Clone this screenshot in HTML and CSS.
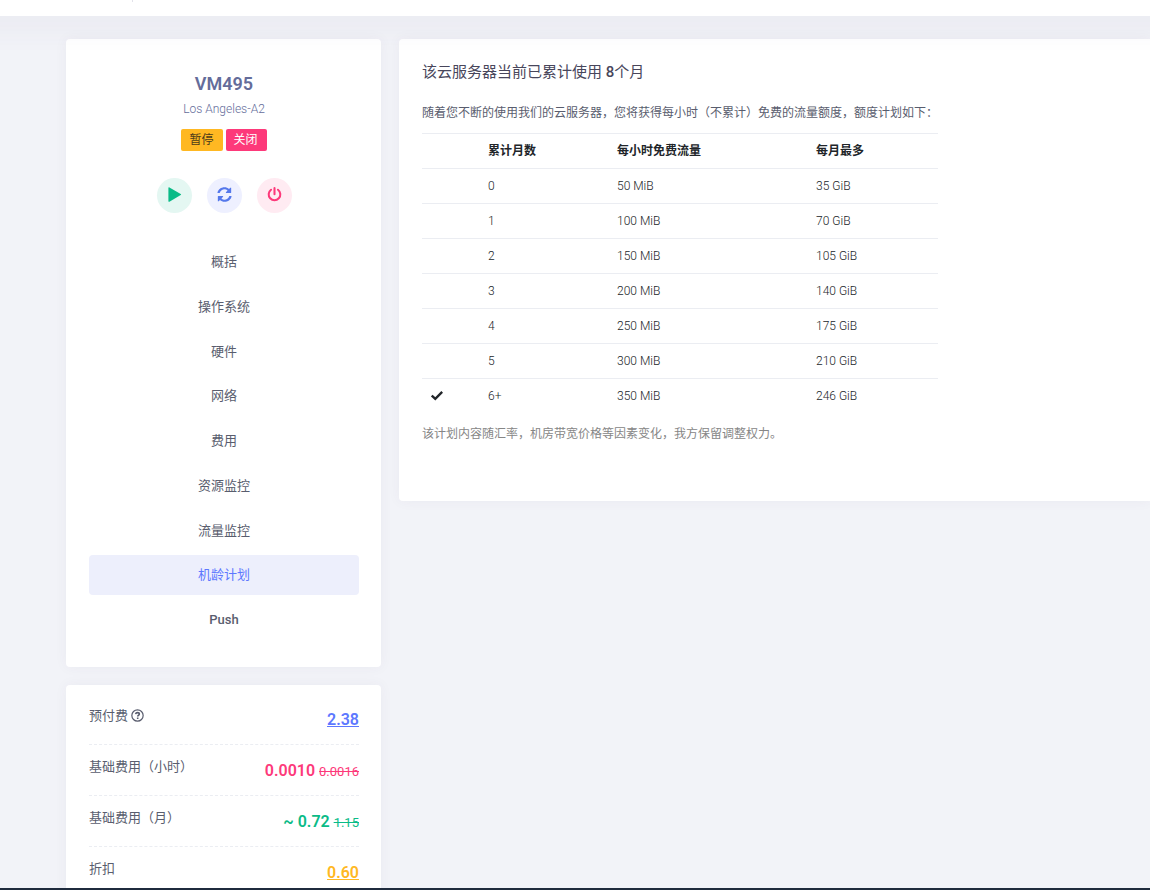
FILE: index.html
```html
<!DOCTYPE html>
<html lang="zh-CN">
<head>
<meta charset="utf-8">
<title>VM495</title>
<link rel="stylesheet" href="styles.css">
</head>
<body>
<header class="topbar"><span class="topbar-divider"></span></header>
<main class="page">
  <aside class="sidebar">
    <section class="card profile">
      <h1 class="vm-name">VM495</h1>
      <p class="vm-region">Los Angeles-A2</p>
      <div class="badges">
        <span class="badge badge-warning">暂停</span>
        <span class="badge badge-danger">关闭</span>
      </div>
      <div class="actions">
        <button class="action action-start" type="button" aria-label="启动">
          <svg viewBox="0 0 16 16" width="15" height="15"><path fill="currentColor" d="M1.500.9c0-.6.600-.8 1.100-.5l12 7c.6.300.6.900 0 1.200l-12 7c-.5.300-1.100.1-1.100-.5z"/></svg>
        </button>
        <button class="action action-restart" type="button" aria-label="重启">
          <svg viewBox="0 0 512 512" width="15" height="15"><path fill="currentColor" d="M483.500 28.500v160a19 19 0 0 1-19 19h-160v-30l56-56C331 95 296 80 257 80c-72 0-137 47-161 116l-4 12H14l3-18C37 79 137 8 257 8c58 0 112 22 154 60l40-40zM28.500 483.500v-160a19 19 0 0 1 19-19h160v30l-56 56C181 417 216 432 255 432c72 0 137-47 161-116l4-12h78l-3 18C475 433 375 504 255 504c-58 0-112-22-154-60l-40 40z"/></svg>
        </button>
        <button class="action action-power" type="button" aria-label="关闭">
          <svg viewBox="0 0 16 16" width="15" height="15" fill="none" stroke="currentColor" stroke-width="2.200" stroke-linecap="round"><path d="M8 1.200v6.400M4.300 2.900a6.200 6.200 0 1 0 7.400 0"/></svg>
        </button>
      </div>
      <nav class="menu">
        <a class="menu-item" href="#">概括</a>
        <a class="menu-item" href="#">操作系统</a>
        <a class="menu-item" href="#">硬件</a>
        <a class="menu-item" href="#">网络</a>
        <a class="menu-item" href="#">费用</a>
        <a class="menu-item" href="#">资源监控</a>
        <a class="menu-item" href="#">流量监控</a>
        <a class="menu-item menu-item-active" href="#">机龄计划</a>
        <a class="menu-item menu-item-latin" href="#">Push</a>
      </nav>
    </section>
    <section class="card prices">
      <div class="price-row">
        <span class="price-label">预付费 <svg class="help" viewBox="0 0 14 14" width="13" height="13" fill="none" stroke="currentColor"><circle cx="7" cy="7" r="6.100" stroke-width="1.300"/><path stroke-width="1.700" d="M4.900 5.500C5.200 4.300 6 3.900 7 3.900c1.200 0 2 .7 2 1.600 0 1.300-1.800 1.200-1.800 2.600M7.200 9.200v1.700"/></svg></span>
        <a class="price price-brand" href="#">2.38</a>
      </div>
      <div class="price-row">
        <span class="price-label">基础费用（小时）</span>
        <span class="price price-danger">0.0010 <del class="old">0.0016</del></span>
      </div>
      <div class="price-row">
        <span class="price-label">基础费用（月）</span>
        <span class="price price-success">~ 0.72 <del class="old">1.15</del></span>
      </div>
      <div class="price-row">
        <span class="price-label">折扣</span>
        <a class="price price-warning" href="#">0.60</a>
      </div>
    </section>
  </aside>
  <section class="card plan">
    <h2 class="plan-title">该云服务器当前已累计使用 <b class="months">8</b>个月</h2>
    <p class="plan-intro">随着您不断的使用我们的云服务器，您将获得每小时（不累计）免费的流量额度，额度计划如下：</p>
    <table class="plan-table">
      <colgroup><col class="col-mark"><col class="col-months"><col class="col-hourly"><col class="col-monthly"></colgroup>
      <thead><tr><th></th><th>累计月数</th><th>每小时免费流量</th><th>每月最多</th></tr></thead>
      <tbody>
        <tr><td></td><td>0</td><td>50 MiB</td><td>35 GiB</td></tr>
        <tr><td></td><td>1</td><td>100 MiB</td><td>70 GiB</td></tr>
        <tr><td></td><td>2</td><td>150 MiB</td><td>105 GiB</td></tr>
        <tr><td></td><td>3</td><td>200 MiB</td><td>140 GiB</td></tr>
        <tr><td></td><td>4</td><td>250 MiB</td><td>175 GiB</td></tr>
        <tr><td></td><td>5</td><td>300 MiB</td><td>210 GiB</td></tr>
        <tr><td><svg class="check" viewBox="0 0 12 12" width="12" height="12" fill="none" stroke="currentColor" stroke-width="2.400"><path d="M.8 5.500 4.300 8.800 11.200 1.900"/></svg></td><td>6+</td><td>350 MiB</td><td>246 GiB</td></tr>
      </tbody>
    </table>
    <p class="plan-note">该计划内容随汇率，机房带宽价格等因素变化，我方保留调整权力。</p>
  </section>
</main>
</body>
</html>
```
FILE: styles.css
```css
* {
  box-sizing: border-box;
}

body {
  margin: 0;
  height: 100vh;
  display: flex;
  flex-direction: column;
  overflow: hidden;
  background: #f2f3f8;
  border-bottom: 2px solid #1f2b3d;
  color: #595d6e;
  font: 400 13px/20px Roboto, "Noto Sans CJK SC", sans-serif;
}

h1, h2, p {
  margin: 0;
}

/* Wider than the window, so that its shadow does not fade at the edges. */
.topbar {
  flex: none;
  position: relative;
  z-index: 1;
  height: 16px;
  margin: 0 -40px;
  padding-left: 172px;
  background: #fff;
  box-shadow: 0 10px 30px rgba(82, 63, 105, 0.08);
}

.topbar-divider {
  display: block;
  width: 1px;
  height: 2px;
  background: #e2e2ea;
}

.page {
  flex: 1;
  min-height: 0;
  overflow: hidden;
  display: flex;
  align-items: flex-start;
  gap: 18px;
  padding: 23px 0 0 66px;
}

.card {
  background: #fff;
  border-radius: 4px;
  box-shadow: 0 0 13px rgba(82, 63, 105, 0.05);
}

.sidebar {
  flex: none;
  width: 315px;
  display: flex;
  flex-direction: column;
  gap: 18px;
}

.profile {
  padding: 32px 22px 27px 23px;
  text-align: center;
}

.vm-name {
  color: #646c9a;
  font-size: 18px;
  font-weight: 600;
  line-height: 26px;
}

.vm-region {
  margin-top: 2px;
  color: #646c9a;
  font-size: 12px;
  font-weight: 300;
}

.badges {
  display: flex;
  justify-content: center;
  gap: 3px;
  margin-top: 10px;
}

.badge {
  padding: 0 9px 0 8px;
  border-radius: 2px;
  font-size: 12px;
  line-height: 22px;
}

.badge-warning {
  background: #ffb822;
  color: #4d3c1a;
}

.badge-danger {
  background: #fd397a;
  color: #fff;
}

.actions {
  display: flex;
  justify-content: center;
  gap: 15px;
  margin-top: 27px;
}

.action {
  display: flex;
  align-items: center;
  justify-content: center;
  width: 35px;
  height: 35px;
  padding: 0 0 2px;
  border: 0;
  border-radius: 50%;
}

.action-start {
  background: #e4f7f2;
  color: #0abb87;
}

.action-restart {
  background: #eef0ff;
  color: #5578eb;
}

.action-power {
  background: #ffebf2;
  color: #fd397a;
}

.menu {
  display: flex;
  flex-direction: column;
  justify-content: space-between;
  min-height: 398px;
  margin-top: 29px;
}

.menu-item {
  border-radius: 4px;
  color: #595d6e;
  line-height: 40px;
  text-decoration: none;
}

.menu-item-latin {
  font-weight: 500;
}

.menu-item-active {
  background: #edeffc;
  color: #5d78ff;
}

.prices {
  padding: 9px 22px 9px 23px;
}

.price-row {
  display: flex;
  justify-content: space-between;
  height: 51px;
  padding-top: 12px;
  border-bottom: 1px dashed #ebedf2;
}

.help {
  vertical-align: -2px;
}

.price {
  font-size: 16px;
  font-weight: 600;
  line-height: 28px;
}

.price-brand {
  color: #5d78ff;
}

.price-danger {
  color: #fd397a;
}

.price-success {
  color: #0abb87;
}

.price-warning {
  color: #ffb822;
}

.old {
  font-size: 13px;
  font-weight: 400;
}

.plan {
  flex: 1;
  min-width: 0;
  padding: 22px 0 57px 23px;
  border-radius: 4px 0 0 4px;
}

.plan-title {
  color: #48465b;
  font-size: 15px;
  font-weight: 400;
  line-height: 22px;
}

.months {
  font-weight: 500;
}

.plan-intro {
  margin-top: 20px;
  font-size: 12px;
}

.plan-table {
  width: 516px;
  margin-top: 10px;
  border-collapse: collapse;
  table-layout: fixed;
  color: #212529;
  font-size: 12px;
  font-weight: 300;
  line-height: 18px;
  text-align: left;
}

.col-mark {
  width: 57px;
}

.col-months {
  width: 129px;
}

.col-hourly {
  width: 199px;
}

.plan-table th,
.plan-table td {
  height: 35px;
  padding: 0 9px;
  border-top: 1px solid #ebedf2;
}

.plan-table th {
  font-weight: 600;
}

.check {
  display: block;
}

.plan-note {
  margin-top: 10px;
  color: #868686;
  font-size: 12px;
}
```
